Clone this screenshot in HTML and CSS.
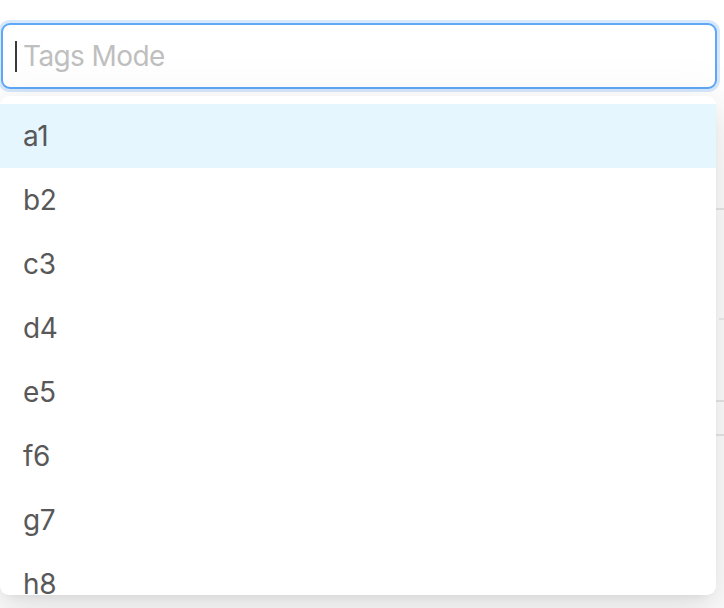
FILE: index.html
```html
<!DOCTYPE html>
<html>
<head>
<meta charset="utf-8">
<link rel="stylesheet" href="styles.css">
</head>
<body>
<div class="page">
  <div class="select">
    <div class="selector">
      <span class="caret"></span>
      <span class="placeholder">Tags Mode</span>
    </div>
    <div class="dropdown">
      <div class="option active">a1</div>
      <div class="option">b2</div>
      <div class="option">c3</div>
      <div class="option">d4</div>
      <div class="option">e5</div>
      <div class="option">f6</div>
      <div class="option">g7</div>
      <div class="option">h8</div>
    </div>
  </div>
  <div class="backdrop">
    <div class="bg-row r1"></div>
    <div class="bg-row r2"></div>
    <div class="bg-row r3"></div>
    <div class="bg-row r4"></div>
  </div>
</div>
</body>
</html>
```

FILE: styles.css
```css
html, body {
  margin: 0;
  padding: 0;
  background: #ffffff;
  width: 724px;
  height: 608px;
  overflow: hidden;
  font-family: Inter, "Liberation Sans", Arial, sans-serif;
}

.page {
  position: relative;
  padding-top: 23px;
}

.select {
  position: relative;
  margin-left: 1px;
  width: 716px;
}

.selector {
  box-sizing: border-box;
  height: 66px;
  border: 2px solid #5ea8f7;
  border-radius: 9px;
  box-shadow: 0 0 0 3px #d7e8fc;
  background: #fff;
  display: flex;
  align-items: center;
  padding-left: 12px;
  gap: 6px;
}

.caret {
  width: 2px;
  height: 31px;
  background: #3a3a3a;
}

.placeholder {
  font-size: 28px;
  color: #bfbfbf;
  letter-spacing: -0.6px;
  line-height: 1;
}

.dropdown {
  position: absolute;
  left: -1px;
  top: 73px;
  width: 716px;
  height: 499px;
  box-sizing: border-box;
  padding-top: 8px;
  background: #fff;
  border-radius: 9px;
  overflow: hidden;
  z-index: 2;
  box-shadow: 0 12px 32px 0 rgba(0,0,0,0.08), 0 6px 12px -8px rgba(0,0,0,0.12), 0 18px 56px 16px rgba(0,0,0,0.05);
}

.option {
  height: 64px;
  display: flex;
  align-items: center;
  padding-left: 23px;
  font-size: 28px;
  color: #585858;
  letter-spacing: -0.3px;
}

.option.active {
  background: #e6f6ff;
}

.backdrop {
  padding-top: 119px;
}

.bg-row {
  border-bottom: 2px solid #e8e8e8;
}

.r1 { height: 0; }
.r2 { height: 108px; margin-left: 719px; border-bottom-color: #eeeeee; }
.r3 { height: 80px; }
.r4 { height: 32px; }
```
